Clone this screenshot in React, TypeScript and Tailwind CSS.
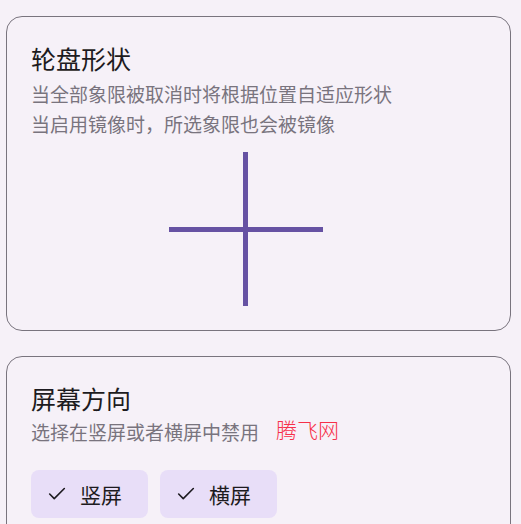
import { Check } from "lucide-react";

/*
 * Settings page fragment: two outlined cards.
 *  - wheel shape picker (cross of quadrant dividers)
 *  - screen orientation filter chips
 */

const font = "font-['Noto_Sans_CJK_SC','Noto_Sans',sans-serif]";

function Card({ children }: { children: React.ReactNode }) {
  return (
    <div className="w-[505px] rounded-[16px] border border-[#79747e] px-6 pt-[25px]">
      {children}
    </div>
  );
}

function Chip({ label }: { label: string }) {
  return (
    <div className="flex h-12 w-[117px] items-center gap-[12px] rounded-lg bg-[#e8def8] pl-[15px] text-[21px] text-[#1d1b20]">
      <Check size={22} strokeWidth={1.75} />
      <span className="leading-none">{label}</span>
    </div>
  );
}

export default function App() {
  return (
    <div className={`min-h-[524px] w-[521px] overflow-hidden bg-[#f6f1f8] pl-[6px] pt-4 ${font}`}>
      <Card>
        <h2 className="text-[25px] leading-[32px] text-[#1d1b20]">轮盘形状</h2>
        <div className="mt-[5px] text-[19px] leading-[30px] text-[#79747e]">
          <p>当全部象限被取消时将根据位置自适应形状</p>
          <p>当启用镜像时，所选象限也会被镜像</p>
        </div>
        <div className="ml-[138px] mt-[13px] mb-[24px]">
          <svg width="154" height="154" viewBox="0 0 154 154" className="block">
            <rect x="74" y="0" width="5" height="154" fill="#6652a3" />
            <rect x="0" y="75" width="154" height="5" fill="#6652a3" />
          </svg>
        </div>
      </Card>

      <div className="mt-[25px]">
        <Card>
          <div className="relative">
            <h2 className="text-[25px] leading-[32px] text-[#1d1b20]">屏幕方向</h2>
            <p className="mt-[6px] text-[19px] leading-[24px] text-[#79747e]">
              选择在竖屏或者横屏中禁用
            </p>
            <span className="absolute left-[245px] top-[33px] text-[21px] font-light leading-[28px] text-[#f6304a]">
              腾飞网
            </span>
            <div className="mt-[26px] flex gap-[12px] pb-6">
              <Chip label="竖屏" />
              <Chip label="横屏" />
            </div>
          </div>
        </Card>
      </div>
    </div>
  );
}
